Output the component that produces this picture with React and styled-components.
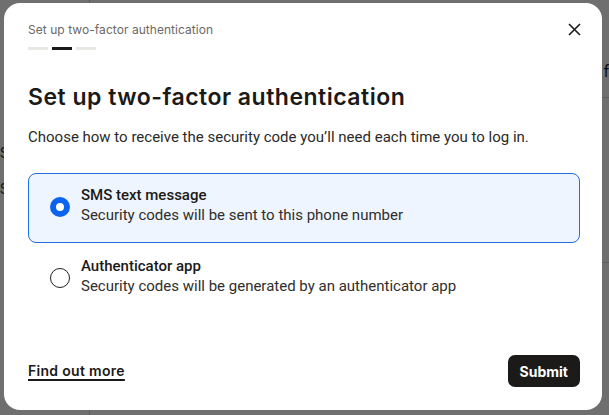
import React from "react";
import styled, { createGlobalStyle } from "styled-components";

const Global = createGlobalStyle`
  html, body { margin: 0; padding: 0; }
  body {
    width: 609px;
    height: 415px;
    overflow: hidden;
    background: #ffffff;
    font-family: Roboto, "Liberation Sans", sans-serif;
  }
  * { box-sizing: border-box; }
`;

const Page = styled.div`
  display: flex;
  width: 609px;
  height: 415px;
`;

const Sidebar = styled.div`
  width: 90px;
  border-right: 1px solid #d4d4d4;
  padding: 145px 0 0 0;
  font-size: 14px;
  color: #333;
  display: flex;
  flex-direction: column;
  gap: 20px;
`;

const Main = styled.div`
  flex: 1;
  display: flex;
  flex-direction: column;
  align-items: flex-end;
  padding-top: 62px;
  font-size: 16px;
  color: #223;
`;

const Rule = styled.div`
  width: 100%;
  height: 1px;
  background: #dcdcdc;
  margin-top: ${(p) => p.$mt}px;
`;

const Overlay = styled.div`
  position: fixed;
  inset: 0;
  background: rgba(0, 0, 0, 0.565);
  display: flex;
  align-items: flex-start;
  padding: 3px 7px 5px 4px;
`;

const Modal = styled.div`
  width: 598px;
  height: 407px;
  background: #ffffff;
  border-radius: 16px;
  padding: 19px 22px 23px 24px;
  display: flex;
  flex-direction: column;
`;

const Header = styled.div`
  display: flex;
  justify-content: space-between;
  align-items: flex-start;
`;

const StepBox = styled.div`
  display: flex;
  flex-direction: column;
  gap: 9px;
`;

const StepTitle = styled.div`
  font-family: Inter, "Liberation Sans", sans-serif;
  font-size: 12px;
  line-height: 16px;
  color: #6b6966;
  letter-spacing: 0.05px;
`;

const Bars = styled.div`
  display: flex;
  gap: 4px;
`;

const Bar = styled.span`
  width: 20px;
  height: 3px;
  background: ${(p) => (p.$active ? "#1b1a19" : "#e8e7e4")};
`;

const Close = styled.button`
  width: 20px;
  height: 20px;
  margin: -3px -4px 0 0;
  border: 0;
  background: transparent;
  padding: 0;
  display: flex;
  align-items: center;
  justify-content: center;
  cursor: pointer;
`;

const Heading = styled.h1`
  margin: 33px 0 0 0;
  font-family: Inter, "Liberation Sans", sans-serif;
  font-weight: 600;
  font-size: 23px;
  line-height: 28px;
  color: #1b1a19;
  letter-spacing: 0.5px;
`;

const Lead = styled.p`
  margin: 16px 0 0 0;
  font-size: 15px;
  line-height: 20px;
  color: #2b2a29;
`;

const Options = styled.div`
  margin-top: 26px;
  display: flex;
  flex-direction: column;
  gap: 1px;
`;

const Option = styled.label`
  display: flex;
  align-items: center;
  gap: 11px;
  padding: 11px 16px 17px 21px;
  border: 1px solid ${(p) => (p.$selected ? "#1f6fe5" : "transparent")};
  background: ${(p) => (p.$selected ? "#eff5fe" : "transparent")};
  border-radius: 8px;
  cursor: pointer;
`;

const Radio = styled.span`
  width: 20px;
  height: 20px;
  flex: none;
  border-radius: 50%;
  margin-top: 4px;
  border: ${(p) => (p.$checked ? "6px solid #0b63f0" : "1.3px solid #1f1f1f")};
  background: #ffffff;
`;

const OptionText = styled.div`
  display: flex;
  flex-direction: column;
`;

const OptionTitle = styled.span`
  font-size: 15px;
  line-height: 20px;
  font-weight: 500;
  color: #1b1a19;
`;

const OptionSub = styled.span`
  font-size: 15px;
  line-height: 20px;
  color: #2f2e2d;
`;

const Footer = styled.div`
  margin-top: auto;
  display: flex;
  align-items: center;
  justify-content: space-between;
`;

const MoreLink = styled.a`
  font-family: Inter, "Liberation Sans", sans-serif;
  font-weight: 600;
  font-size: 14px;
  color: #1b1a19;
  letter-spacing: 0.3px;
  text-decoration: underline;
  text-underline-offset: 3px;
  text-decoration-thickness: 1.5px;
  margin-top: -2px;
`;

const Submit = styled.button`
  height: 32px;
  padding: 0 12px;
  border: 0;
  border-radius: 7px;
  background: #1b1a19;
  color: #ffffff;
  font-family: Inter, "Liberation Sans", sans-serif;
  font-weight: 700;
  font-size: 14px;
  cursor: pointer;
`;

export default function App() {
  return (
    <>
      <Global />
      <Page>
        <Sidebar>
          <span>Settings</span>
          <span>Security</span>
        </Sidebar>
        <Main>
          <span>f</span>
          <Rule $mt={16} />
          <Rule $mt={164} />
        </Main>
      </Page>
      <Overlay>
        <Modal role="dialog" aria-label="Set up two-factor authentication">
          <Header>
            <StepBox>
              <StepTitle>Set up two-factor authentication</StepTitle>
              <Bars>
                <Bar />
                <Bar $active />
                <Bar />
              </Bars>
            </StepBox>
            <Close aria-label="Close">
              <svg width="13" height="13" viewBox="0 0 13 13" fill="none">
                <path d="M1 1L12 12M12 1L1 12" stroke="#1b1a19" strokeWidth="1.6" />
              </svg>
            </Close>
          </Header>
          <Heading>Set up two-factor authentication</Heading>
          <Lead>Choose how to receive the security code you’ll need each time you to log in.</Lead>
          <Options>
            <Option $selected>
              <Radio $checked />
              <OptionText>
                <OptionTitle>SMS text message</OptionTitle>
                <OptionSub>Security codes will be sent to this phone number</OptionSub>
              </OptionText>
            </Option>
            <Option>
              <Radio />
              <OptionText>
                <OptionTitle>Authenticator app</OptionTitle>
                <OptionSub>Security codes will be generated by an authenticator app</OptionSub>
              </OptionText>
            </Option>
          </Options>
          <Footer>
            <MoreLink href="#">Find out more</MoreLink>
            <Submit>Submit</Submit>
          </Footer>
        </Modal>
      </Overlay>
    </>
  );
}
